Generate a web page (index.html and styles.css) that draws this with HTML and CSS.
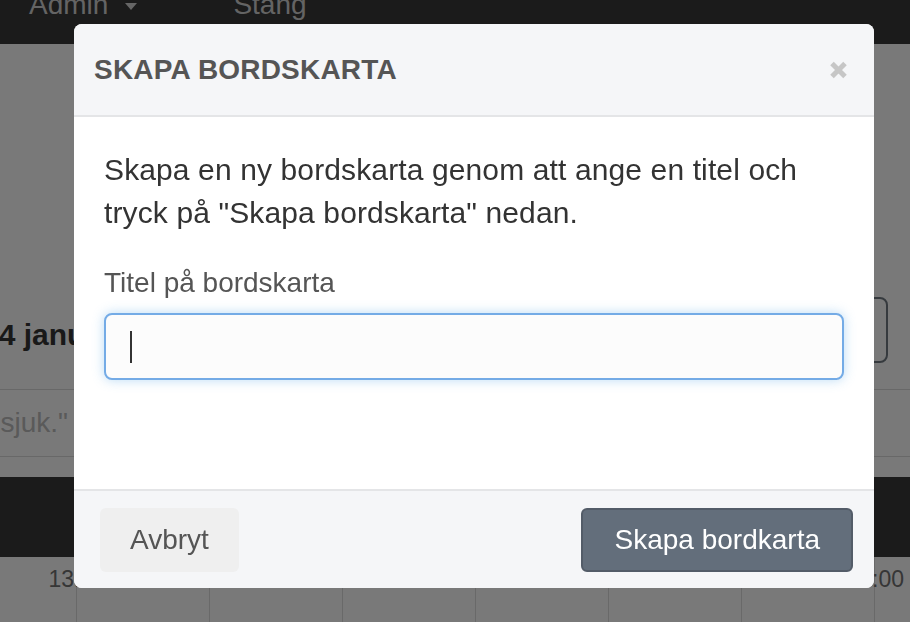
FILE: index.html
```html
<!DOCTYPE html>
<html lang="sv">
<head>
    <meta charset="UTF-8">
    <meta name="viewport" content="width=device-width, initial-scale=1.0">
    <title>Skapa bordskarta</title>
    <link rel="stylesheet" href="styles.css">
</head>
<body>
    <nav class="topbar">
        <a class="nav-link">Admin <span class="caret"></span></a>
        <a class="nav-link">Stang</a>
    </nav>

    <main class="page">
        <div class="date-row">
            <h2 class="date">24 januari</h2>
            <button class="btn-outline"></button>
        </div>
        <div class="quote-row"><span>"Jag är sjuk."</span></div>
        <div class="dark-band"></div>
        <div class="timeline">
            <div class="slot"><span>13:00</span></div>
            <div class="slot"><span>14:00</span></div>
            <div class="slot"><span>15:00</span></div>
            <div class="slot"><span>16:00</span></div>
            <div class="slot"><span>17:00</span></div>
            <div class="slot"><span>18:00</span></div>
            <div class="slot"><span>19:00</span></div>
            <div class="slot"><span>20:00</span></div>
        </div>
    </main>

    <div class="backdrop"></div>

    <div class="modal">
        <div class="modal-header">
            <h3>Skapa bordskarta</h3>
            <button class="close" aria-label="Stäng">
                <svg width="19" height="18" viewBox="0 0 19 18">
                    <path d="M3 2.5 L16 15.5 M16 2.5 L3 15.5" stroke="#c6c6c6" stroke-width="5" fill="none"/>
                </svg>
            </button>
        </div>
        <div class="modal-body">
            <p>Skapa en ny bordskarta genom att ange en titel och tryck på "Skapa bordskarta" nedan.</p>
            <label for="title">Titel på bordskarta</label>
            <div class="input-wrap">
                <input type="text" id="title">
                <span class="caret-line"></span>
            </div>
        </div>
        <div class="modal-footer">
            <button class="btn-cancel">Avbryt</button>
            <button class="btn-primary">Skapa bordkarta</button>
        </div>
    </div>
</body>
</html>
```

FILE: styles.css
```css
html, body {
    overflow: hidden;
}
body {
    margin: 0;
    background: #f3f3f3;
    font-family: "Liberation Sans", Arial, Helvetica, sans-serif;
    color: #333;
}

/* page under the backdrop */
.topbar {
    height: 44px;
    background: #363636;
    display: flex;
    align-items: flex-start;
    padding-left: 29px;
    overflow: hidden;
}
.nav-link {
    font-size: 28px;
    line-height: 28px;
    margin-top: -9px;
    color: #c8c8c8;
    display: flex;
    align-items: flex-start;
}
.nav-link + .nav-link {
    margin-left: 96px;
}
.caret {
    display: inline-block;
    margin: 12px 0 0 17px;
    border-top: 7px solid #cccccc;
    border-left: 6px solid transparent;
    border-right: 6px solid transparent;
}

.page {
    padding-top: 253px;
}
.date-row {
    display: flex;
    justify-content: space-between;
    align-items: flex-start;
    padding: 0 22px 26px 0;
    height: 66px;
}
.date {
    margin: 23px 0 0 -18px;
    font-size: 30px;
    line-height: 30px;
    color: #333;
}
.btn-outline {
    width: 200px;
    height: 66px;
    background: transparent;
    border: 2px solid #6c757d;
    border-radius: 8px;
}
.date-row,
.quote-row {
    border-bottom: 1px solid #d0d0d0;
}
.quote-row {
    height: 66px;
    line-height: 66px;
    font-size: 28px;
    color: #b4b4b4;
    white-space: nowrap;
    overflow: hidden;
}
.quote-row span {
    display: inline-block;
    margin-left: -95px;
}
.dark-band {
    margin-top: 20px;
    height: 80px;
    background: #363636;
}
.timeline {
    display: flex;
    margin-left: -56px;
    height: 120px;
}
.slot {
    flex: 0 0 133px;
    box-sizing: border-box;
    border-right: 1px solid #d2d2d2;
}
.slot span {
    display: block;
    margin: 10px -30px 0 0;
    text-align: right;
    font-size: 23px;
    line-height: 24px;
    color: #6c6c6c;
}

.backdrop {
    position: fixed;
    inset: 0;
    background: rgba(0, 0, 0, 0.5);
}

/* modal */
.modal {
    position: fixed;
    top: 24px;
    left: 74px;
    width: 800px;
    height: 564px;
    background: #fff;
    border-radius: 8px;
    overflow: hidden;
    display: flex;
    flex-direction: column;
}
.modal-header {
    height: 91px;
    flex: 0 0 91px;
    background: #f5f6f8;
    border-bottom: 2px solid #e4e5e7;
    padding: 0 26px 0 20px;
    display: flex;
    align-items: center;
    justify-content: space-between;
}
.modal-header h3 {
    margin: 0;
    font-size: 28px;
    line-height: 28px;
    letter-spacing: 0.2px;
    text-transform: uppercase;
    color: #555;
}
.close {
    padding: 0;
    border: none;
    background: none;
    display: flex;
    margin-top: 1px;
}
.modal-body {
    flex: 1;
    padding: 31px 30px 0;
}
.modal-body p {
    margin: 0;
    font-size: 30px;
    line-height: 43px;
    letter-spacing: 0.12px;
    color: #333;
}
.modal-body label {
    display: block;
    margin-top: 29px;
    font-size: 28px;
    line-height: 40px;
    color: #555;
}
.input-wrap {
    position: relative;
    margin-top: 10px;
}
.input-wrap input {
    display: block;
    box-sizing: border-box;
    width: 100%;
    height: 67px;
    padding: 0 26px;
    font-size: 28px;
    font-family: inherit;
    background: #fcfcfc;
    border: 2px solid #74abe6;
    border-radius: 8px;
    box-shadow: 0 0 12px rgba(102, 175, 233, 0.45);
    outline: none;
}
.caret-line {
    position: absolute;
    left: 26px;
    top: 18px;
    width: 2px;
    height: 32px;
    background: #333;
}
.modal-footer {
    flex: 0 0 99px;
    box-sizing: border-box;
    background: #f5f6f8;
    border-top: 2px solid #e4e5e7;
    padding: 17px 21px 16px 26px;
    display: flex;
    justify-content: space-between;
}
.modal-footer button {
    height: 64px;
    padding: 0 30px;
    font-size: 28px;
    font-family: inherit;
    border-radius: 6px;
}
.btn-cancel {
    background: #efefef;
    color: #555;
    border: none;
}
.modal-footer .btn-primary {
    padding: 0 31px 0 32px;
    background: #636e7b;
    color: #fff;
    border: 2px solid #535c68;
}
```
